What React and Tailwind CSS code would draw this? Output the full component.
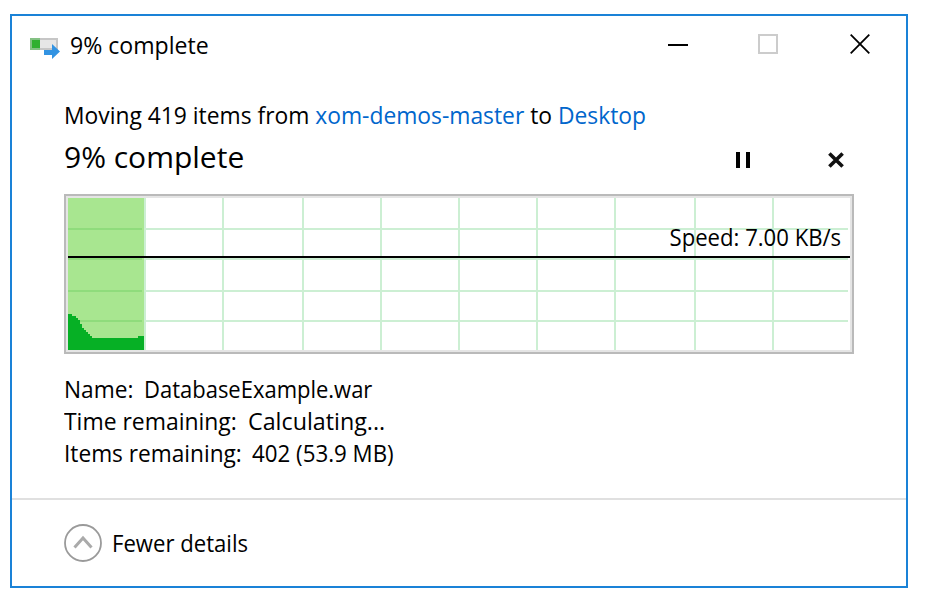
const VERTICALS = [76, 154, 234, 312, 390, 468, 546, 626, 704];
const HORIZONTALS = [30, 60, 92, 122];

function SpeedChart() {
  return (
    <div className="relative h-[160px] w-[790px] border-2 border-[#bababa]">
      <div className="h-full border-2 border-[#e5e5e5]">
        <svg width="782" height="152" viewBox="0 0 782 152" shapeRendering="crispEdges" className="block">
          <rect width="782" height="152" fill="#ffffff" />
          {HORIZONTALS.map((y) => (
            <rect key={y} x="76" y={y} width="704" height="2" fill="#ccefd3" />
          ))}
          {VERTICALS.map((x) => (
            <rect key={x} x={x} width="2" height="152" fill="#ccefd3" />
          ))}
          <rect width="76" height="152" fill="#a8e690" />
          {HORIZONTALS.map((y) => (
            <rect key={y} y={y} width="74" height="2" fill="#8fdc7c" />
          ))}
          <path d="M0 116H4V118H8V120H10V122H12V126H14V130H16V132H18V134H20V136H22V138H24V140H70V138H76V152H0Z" fill="#06b025" />
          <rect y="58" width="782" height="2" fill="#000000" />
        </svg>
      </div>
      <span className="absolute right-[11px] top-[25px] origin-right scale-x-[0.922] leading-8">Speed: 7.00 KB/s</span>
    </div>
  );
}

function TransferIcon() {
  return (
    <svg width="30" height="22" viewBox="0 0 30 22" className="block">
      <rect width="28" height="12" fill="#c6c6c6" />
      <rect x="2" y="2" width="24" height="8" fill="#e6e6e6" />
      <rect width="10" height="12" fill="#84c184" />
      <rect x="2" y="2" width="8" height="8" fill="#30b030" />
      <path d="M14 12H22V6L30 13.5L22 21V17H14Z" fill="#3293e2" />
    </svg>
  );
}

export default function App() {
  return (
    <div className="h-[614px] w-[930px] bg-white pl-[10px] pt-[14px] font-['Open_Sans','Noto_Sans',sans-serif] text-[24px] text-black">
      <div className="flex h-[574px] w-[898px] flex-col border-2 border-[#1a82d7] whitespace-pre">
        <header className="flex h-[60px] items-start pl-[18px] pt-[12px]">
          <div className="mt-[10px]"><TransferIcon /></div>
          <h1 className="ml-[9px] mt-px w-[600px] origin-left scale-x-[0.962] pl-px leading-8">9% complete</h1>
          <svg width="182" height="20" viewBox="0 0 182 20" className="-ml-[1px] mt-[6px] block">
            <path d="M0 11H20" stroke="#000" strokeWidth="2" />
            <rect x="91" y="1" width="18" height="18" fill="none" stroke="#cccccc" strokeWidth="2" />
          </svg>
          <svg width="20" height="20" viewBox="0 0 20 20" className="mt-[6px] block">
            <path d="M.7.7L19.3 19.3M19.3.7L.7 19.3" stroke="#000" strokeWidth="1.8" />
          </svg>
        </header>
        <main className="flex h-[422px] flex-col pl-[52px] pt-[23px]">
          <p className="h-[37px] origin-left scale-x-[0.951] leading-8">
            <span>Moving 419 items from </span>
            <span className="text-[#0066cc]">xom-demos-master</span>
            <span> to </span>
            <span className="text-[#0066cc]">Desktop</span>
          </p>
          <div className="flex h-[58px]">
            <h2 className="mt-px w-[672px] text-[30px] leading-10">9% complete</h2>
            <svg width="14" height="16" viewBox="0 0 14 16" className="mt-[16px] block">
              <path d="M2 0V16M12 0V16" stroke="#000" strokeWidth="4" />
            </svg>
            <svg width="16" height="16" viewBox="0 0 16 16" className="ml-[78px] mt-[16px] block">
              <path d="M1.4 1.4L14.6 14.6M14.6 1.4L1.4 14.6" stroke="#111" strokeWidth="3.6" />
            </svg>
          </div>
          <SpeedChart />
          <div className="mt-[19px] leading-8">
            <p className="flex">
              <span className="w-[80px] origin-left scale-x-[0.945]">Name:</span>
              <span className="origin-left scale-x-[0.916]">DatabaseExample.war</span>
            </p>
            <p className="flex">
              <span className="w-[184px] origin-left scale-x-[0.955]">Time remaining:</span>
              <span className="origin-left scale-x-[0.97]">Calculating...</span>
            </p>
            <p className="flex">
              <span className="w-[188px] origin-left scale-x-[0.944]">Items remaining:</span>
              <span className="origin-left scale-x-[0.93]">402 (53.9 MB)</span>
            </p>
          </div>
        </main>
        <footer className="flex grow items-center border-t-2 border-[#e0e0e0] pl-[52px]">
          <svg width="38" height="38" viewBox="0 0 38 38" className="block" fill="none">
            <circle cx="19" cy="19" r="18" stroke="#9a9a9a" strokeWidth="1.8" />
            <path d="M10.5 23.5L19 14L27.5 23.5" stroke="#aaaaaa" strokeWidth="3" />
          </svg>
          <span className="ml-[10px] origin-left scale-x-[0.922] leading-8">Fewer details</span>
        </footer>
      </div>
    </div>
  );
}
